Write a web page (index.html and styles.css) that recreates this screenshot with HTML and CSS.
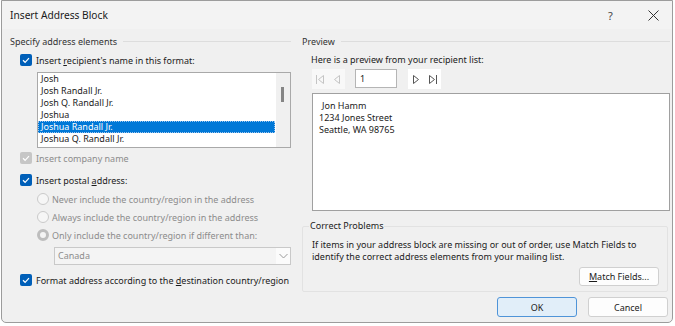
FILE: index.html
```html
<!DOCTYPE html>
<html lang="en">
<head>
    <meta charset="UTF-8">
    <meta name="viewport" content="width=device-width, initial-scale=1.0">
    <title>Insert Address Block</title>
    <link rel="stylesheet" href="styles.css">
</head>
<body>

<div class="dialog">
    <div class="titlebar">
        <span class="title">Insert Address Block</span>
        <span class="help">?</span>
        <span class="close">
            <svg width="11" height="11" viewBox="0 0 11 11"><path d="M0.5 0.5 L10.5 10.5 M10.5 0.5 L0.5 10.5" stroke="#333" stroke-width="1" fill="none"/></svg>
        </span>
    </div>

    <div class="content">
        <div class="col-left">
            <div class="group-head"><span>Specify address elements</span></div>

            <div class="check-row">
                <span class="check"><svg width="12" height="12" viewBox="0 0 12 12"><path d="M3 6.3 L5.1 8.3 L9 4.2" stroke="#fff" stroke-width="1.2" fill="none"/></svg></span>
                <span>Insert <u>r</u>ecipient's name in this format:</span>
            </div>

            <div class="listbox">
                <ul class="names">
                    <li>Josh</li>
                    <li>Josh Randall Jr.</li>
                    <li>Josh Q. Randall Jr.</li>
                    <li>Joshua</li>
                    <li class="selected">Joshua Randall Jr.</li>
                    <li>Joshua Q. Randall Jr.</li>
                </ul>
                <div class="scrollbar"><span class="thumb"></span></div>
            </div>

            <div class="check-row row-company disabled">
                <span class="check"><svg width="12" height="12" viewBox="0 0 12 12"><path d="M3 6.3 L5.1 8.3 L9 4.2" stroke="#fff" stroke-width="1.2" fill="none"/></svg></span>
                <span>Insert company name</span>
            </div>

            <div class="check-row row-postal">
                <span class="check"><svg width="12" height="12" viewBox="0 0 12 12"><path d="M3 6.3 L5.1 8.3 L9 4.2" stroke="#fff" stroke-width="1.2" fill="none"/></svg></span>
                <span>Insert postal <u>a</u>ddress:</span>
            </div>

            <div class="radio-row">
                <span class="radio"></span>
                <span>Never include the country/region in the address</span>
            </div>
            <div class="radio-row">
                <span class="radio"></span>
                <span>Always include the country/region in the address</span>
            </div>
            <div class="radio-row">
                <span class="radio on"></span>
                <span>Only include the country/region if different than:</span>
            </div>

            <div class="combo">
                <span class="combo-text">Canada</span>
                <span class="combo-btn">
                    <svg width="9" height="6" viewBox="0 0 9 6"><path d="M0.5 1 L4.5 5 L8.5 1" stroke="#9a9a9a" stroke-width="1" fill="none"/></svg>
                </span>
            </div>

            <div class="check-row row-format">
                <span class="check"><svg width="12" height="12" viewBox="0 0 12 12"><path d="M3 6.3 L5.1 8.3 L9 4.2" stroke="#fff" stroke-width="1.2" fill="none"/></svg></span>
                <span>Format address according to the <u>d</u>estination country/region</span>
            </div>
        </div>

        <div class="col-right">
            <div class="group-head"><span>Preview</span></div>
            <div class="hint">Here is a preview from your recipient list:</div>

            <div class="nav">
                <span class="nav-btns dim">
                    <svg width="10" height="11" viewBox="0 0 10 11"><path d="M1.5 1 V10 M8.5 1.5 L3.5 5.5 L8.5 9.5 Z" stroke="#c4c4c4" stroke-width="1" fill="none"/></svg>
                    <svg width="10" height="11" viewBox="0 0 10 11"><path d="M7.5 1.5 L2.5 5.5 L7.5 9.5 Z" stroke="#c4c4c4" stroke-width="1" fill="none"/></svg>
                </span>
                <span class="record">1</span>
                <span class="nav-btns">
                    <svg width="10" height="11" viewBox="0 0 10 11"><path d="M2.5 1.5 L7.5 5.5 L2.5 9.5 Z" stroke="#555" stroke-width="1" fill="none"/></svg>
                    <svg width="10" height="11" viewBox="0 0 10 11"><path d="M1.5 1.5 L6.5 5.5 L1.5 9.5 Z M8.5 1 V10" stroke="#555" stroke-width="1" fill="none"/></svg>
                </span>
            </div>

            <div class="preview">
                <div class="indent">Jon Hamm</div>
                <div>1234 Jones Street</div>
                <div>Seattle, WA 98765</div>
            </div>

            <fieldset class="problems">
                <legend>Correct Problems</legend>
                <p>If items in your address block are missing or out of order, use Match Fields to identify the correct address elements from your mailing list.</p>
                <div class="match-row">
                    <button class="btn"><u>M</u>atch Fields...</button>
                </div>
            </fieldset>

            <div class="actions">
                <button class="btn btn-ok">OK</button>
                <button class="btn">Cancel</button>
            </div>
        </div>
    </div>
</div>

</body>
</html>
```

FILE: styles.css
```css
* {
    box-sizing: border-box;
}
body {
    margin: 0;
    background-color: #ffffff;
    font-family: "Noto Sans", "Open Sans", sans-serif;
    font-size: 9px;
    color: #1b1b1b;
}
.dialog {
    width: 672px;
    height: 323px;
    margin-left: 1px;
    background-color: #f0f0f0;
    border: 1px solid #9c9c9c;
    border-radius: 0 0 5px 5px;
}
.titlebar {
    display: flex;
    align-items: center;
    height: 28px;
    padding-left: 8px;
    background-color: #f3f3f3;
}
.title {
    flex: 1;
    font-size: 10.2px;
    color: #1a1a1a;
}
.help {
    width: 40px;
    font-size: 11px;
    color: #444;
}
.close {
    display: flex;
    width: 24px;
}
.content {
    display: flex;
    gap: 11px;
    padding-left: 8px;
}
.col-left {
    width: 281px;
}
.col-right {
    width: 368px;
}
.group-head {
    display: flex;
    align-items: center;
    height: 14px;
    margin-top: 5px;
    color: #333;
}
.group-head::after {
    content: "";
    flex: 1;
    height: 1px;
    margin-left: 6px;
    background-color: #dddddd;
}
.check-row,
.radio-row {
    display: flex;
    align-items: center;
    height: 14px;
    margin-top: 5px;
    margin-left: 10px;
    gap: 3px;
    white-space: nowrap;
}
.check {
    display: flex;
    width: 12px;
    height: 12px;
    margin-right: 1px;
    border-radius: 2px;
    background-color: #005fb8;
}
.disabled {
    color: #8c8c8c;
}
.disabled .check {
    background-color: #c6c6c6;
}
.row-company {
    margin-top: 3px;
}
.row-postal,
.row-format {
    margin-top: 8px;
}
.listbox {
    display: flex;
    height: 76px;
    margin-top: 5px;
    margin-left: 27px;
    background-color: #ffffff;
    border: 1px solid #a9a9a9;
}
.names {
    flex: 1;
    margin: 0;
    padding: 0;
    list-style: none;
}
.names li {
    height: 12px;
    line-height: 12px;
    padding-left: 3px;
    white-space: nowrap;
}
.names li.selected {
    background-color: #0078d7;
    color: #ffffff;
    outline: 1px dotted #9ec6ee;
    outline-offset: -1px;
}
.scrollbar {
    width: 14px;
    margin-left: 1px;
    padding-top: 14px;
    padding-left: 5px;
    background-color: #f0f0f0;
}
.thumb {
    display: block;
    width: 3px;
    height: 15px;
    background-color: #858585;
}
.radio-row {
    margin-left: 27px;
    color: #8c8c8c;
}
.radio-row + .radio-row {
    margin-top: 4px;
}
.radio-row:last-of-type {
    margin-top: 5px;
}
.radio {
    width: 12px;
    height: 12px;
    border-radius: 50%;
    border: 1px solid #cacaca;
    background-color: #f6f6f6;
}
.radio.on {
    border: 3px solid #bdbdbd;
    background-color: #f4f4f4;
}
.combo {
    display: flex;
    height: 18px;
    margin-top: 5px;
    margin-left: 44px;
    width: 237px;
    border: 1px solid #c9c9c9;
    background-color: #f4f4f4;
}
.combo-text {
    flex: 1;
    line-height: 16px;
    padding-left: 3px;
    color: #8c8c8c;
}
.combo-btn {
    display: flex;
    align-items: center;
    justify-content: center;
    width: 14px;
    background-color: #fbfbfb;
}
.hint {
    height: 14px;
    line-height: 14px;
    margin-top: 5px;
    margin-left: 9px;
}
.nav {
    display: flex;
    height: 20px;
    margin-top: 2px;
    margin-left: 10px;
}
.nav-btns {
    display: flex;
    align-items: center;
    justify-content: space-around;
    width: 33px;
    background-color: #ffffff;
}
.nav-btns.dim {
    background-color: #f8f8f8;
}
.record {
    width: 42px;
    height: 19px;
    margin: 0 11px 0 10px;
    padding-left: 4px;
    line-height: 17px;
    background-color: #ffffff;
    border: 1px solid #b5b5b5;
}
.preview {
    height: 118px;
    margin-top: 4px;
    margin-left: 10px;
    padding: 6px 6px;
    line-height: 12px;
    background-color: #ffffff;
    border: 1px solid #a0a0a0;
}
.preview .indent {
    padding-left: 3px;
}
.problems {
    width: 366px;
    margin: 8px 0 0 0;
    padding: 0 8px 5px 9px;
    border: 1px solid #e2e2e2;
    border-radius: 2px;
}
.problems legend {
    height: 14px;
    line-height: 14px;
    margin-left: -3px;
    padding: 0 1px;
}
.problems p {
    margin: 6px 0 0 0;
    line-height: 12px;
}
.match-row {
    display: flex;
    justify-content: flex-end;
    margin-top: 4px;
}
.btn {
    width: 80px;
    height: 20px;
    padding: 0;
    font-family: inherit;
    font-size: 9px;
    color: #1b1b1b;
    background-color: #fdfdfd;
    border: 1px solid #d0d0d0;
    border-radius: 3px;
}
.match-row .btn {
    height: 19px;
}
.actions {
    display: flex;
    justify-content: flex-end;
    gap: 11px;
    margin-top: 5px;
    margin-right: 2px;
}
.btn-ok {
    background-color: #e1eef9;
    border-color: #4f94d8;
}
```
